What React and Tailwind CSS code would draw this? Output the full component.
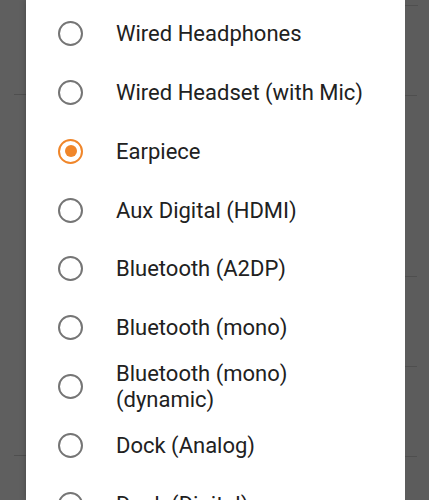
import React from "react";

const items = [
  { label: "Wired Headphones" },
  { label: "Wired Headset (with Mic)" },
  { label: "Earpiece", checked: true },
  { label: "Aux Digital (HDMI)" },
  { label: "Bluetooth (A2DP)" },
  { label: "Bluetooth (mono)" },
  { label: "Bluetooth (mono)\n(dynamic)" },
  { label: "Dock (Analog)" },
  { label: "Dock (Digital)" },
];

function Radio({ checked }) {
  return (
    <div
      className={
        "w-[25px] h-[25px] rounded-full border-[2.5px] flex items-center justify-center shrink-0 " +
        (checked ? "border-[#f0862a]" : "border-[#757575]")
      }
    >
      {checked && <div className="w-[12px] h-[12px] rounded-full bg-[#f0862a]" />}
    </div>
  );
}

function Side({ lines, align }) {
  return (
    <div className={"h-full flex flex-col " + (align === "right" ? "items-end" : "items-start")}>
      {lines.map((show, i) => (
        <div key={i} className="h-[90.2px] shrink-0 flex flex-col justify-end">
          <div className={"w-[12px] h-px " + (show ? "bg-[#4f4f4f]" : "bg-transparent")} />
        </div>
      ))}
    </div>
  );
}

export default function App() {
  return (
    <div
      className="w-[429px] h-[500px] overflow-hidden flex bg-[#5e5e5e]"
      style={{ fontFamily: "Roboto, 'Noto Sans', sans-serif" }}
    >
      <div className="w-[26px] h-full bg-[#5f5f5f] flex justify-end pt-[5px]">
        <Side lines={[true, false, false, false, true]} align="right" />
      </div>
      <div className="w-[379px] h-full bg-white pt-[4px] shadow-[0_0_6px_rgba(0,0,0,0.25)]">
        {items.map((it, i) => (
          <div key={i} className="h-[58.86px] flex items-center pl-[32px]">
            <Radio checked={it.checked} />
            <div className="ml-[33px] pt-[1px] text-[22px] leading-[26px] text-[#212121] whitespace-pre-line">
              {it.label}
            </div>
          </div>
        ))}
      </div>
      <div className="flex-1 h-full bg-[#5c5c5c] flex flex-col items-start">
        <div className="w-[13px] h-px bg-[#4f4f4f] mt-[5px]" />
        <Side lines={[true, false, true, true, true]} align="left" />
      </div>
    </div>
  );
}
